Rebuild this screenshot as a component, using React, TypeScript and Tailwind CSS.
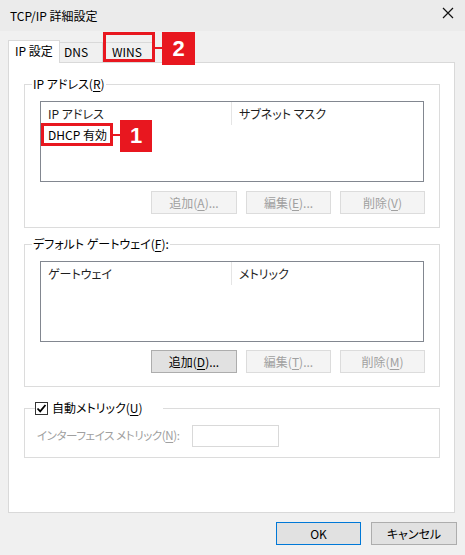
import React from "react";

const font = { fontFamily: '"Noto Sans CJK JP", "Noto Sans", sans-serif' };

function Btn({ children, disabled, primary, w = "w-[85px]" }: { children: React.ReactNode; disabled?: boolean; primary?: boolean; w?: string }) {
  const tone = disabled
    ? "bg-[#f4f4f4] border-[#dcdcdc] text-[#a0a0a0]"
    : primary
      ? "bg-[#e1e1e1] border-[#0078d7] text-black"
      : "bg-[#e1e1e1] border-[#adadad] text-black";
  return (
    <div className={`${w} h-[23px] border flex items-center justify-center text-[12px] leading-none ${tone}`}>
      {children}
    </div>
  );
}

function U({ children }: { children: React.ReactNode }) {
  return <span className="underline underline-offset-2">{children}</span>;
}

function ListBox({ col1, col2, h, children }: { col1: string; col2: string; h: string; children?: React.ReactNode }) {
  return (
    <div className={`w-[384px] ${h} border border-[#828790] bg-white text-[12px] leading-[16px]`}>
      <div className="flex h-[23px] items-center text-[#1e1e1e]">
        <div className="w-[191px] h-full pl-[7px] flex items-center border-r border-[#e5e5e5]">{col1}</div>
        <div className="pl-[7px]">{col2}</div>
      </div>
      {children}
    </div>
  );
}

export default function App() {
  return (
    <div className="relative w-[465px] h-[555px] bg-[#f0f0f0] overflow-hidden text-black [font-feature-settings:'palt']" style={font}>
      {/* title bar */}
      <div className="h-[31px] bg-[#ebebeb] flex items-center justify-between pl-[10px] pr-[11px]">
        <span className="text-[12px] leading-none">TCP/IP 詳細設定</span>
        <svg width="12" height="12" viewBox="0 0 12 12" className="mt-[-6px]">
          <path d="M1 1 L11 11 M11 1 L1 11" stroke="#111" strokeWidth="1.2" fill="none" />
        </svg>
      </div>

      <div className="pl-[8px]">
        {/* tabs */}
        <div className="flex items-end mt-[8px] h-[23px] text-[12px] leading-none">
          <div className="relative z-10 -mb-px h-[23px] w-[52px] border border-b-0 border-[#d9d9d9] bg-white flex items-center pl-[6px] pb-[3px]">
            IP 設定
          </div>
          <div className="h-[20px] w-[43px] border border-l-0 border-b-0 border-[#d9d9d9] flex items-center pl-[4px] pb-[1px]">DNS</div>
          <div className="h-[20px] w-[52px] border border-l-0 border-b-0 border-[#d9d9d9] flex items-center pl-[9px] pb-[1px]">WINS</div>
        </div>

        {/* panel */}
        <div className="w-[447px] h-[451px] border border-[#d9d9d9] bg-white pl-[15px] pt-[13px]">
          <fieldset className="w-[416px] border border-[#dcdcdc] pl-[15px] pr-[14px] pt-[9px] pb-[13px]">
            <legend className="ml-[-8px] px-[1px] text-[12px] leading-[16px]">
              IP アドレス(<U>R</U>)
            </legend>
            <ListBox col1="IP アドレス" col2="サブネット マスク" h="h-[81px]">
              <div className="pl-[7px] pt-[2px]">DHCP 有効</div>
            </ListBox>
            <div className="flex justify-end gap-[9px] mt-[9px]">
              <Btn disabled w="w-[86px]">追加(<U>A</U>)...</Btn>
              <Btn disabled>編集(<U>E</U>)...</Btn>
              <Btn disabled>削除(<U>V</U>)</Btn>
            </div>
          </fieldset>

          <fieldset className="mt-[8px] w-[416px] border border-[#dcdcdc] pl-[15px] pr-[14px] pt-[9px] pb-[13px]">
            <legend className="ml-[-8px] px-[1px] text-[12px] leading-[16px]">
              デフォルト ゲートウェイ(<U>F</U>):
            </legend>
            <ListBox col1="ゲートウェイ" col2="メトリック" h="h-[81px]" />
            <div className="flex justify-end gap-[9px] mt-[8px]">
              <Btn w="w-[86px]">追加(<U>D</U>)...</Btn>
              <Btn disabled>編集(<U>T</U>)...</Btn>
              <Btn disabled>削除(<U>M</U>)</Btn>
            </div>
          </fieldset>

          <fieldset className="mt-[13px] w-[416px] border border-[#dcdcdc] pl-[12px] pr-[14px] pt-[9px] pb-[10px]">
            <legend className="ml-[-2px] pl-[0px] pr-[20px] text-[12px] leading-[16px]">
              <span className="flex items-center gap-[4px]">
                <span className="w-[13px] h-[13px] border border-[#333] bg-white flex items-center justify-center">
                  <svg width="11" height="11" viewBox="0 0 11 11">
                    <path d="M1.5 5.5 L4.2 8.3 L9.5 2" stroke="#000" strokeWidth="1.8" fill="none" />
                  </svg>
                </span>
                <span>自動メトリック(<U>U</U>)</span>
              </span>
            </legend>
            <div className="flex items-center">
              <span className="w-[155px] whitespace-nowrap text-[11.5px] leading-none tracking-[-0.4px] text-[#a0a0a0]">
                インターフェイス メトリック(<U>N</U>):
              </span>
              <div className="w-[87px] h-[22px] border border-[#d9d9d9] bg-white" />
            </div>
          </fieldset>
        </div>

        {/* dialog buttons */}
        <div className="flex justify-end gap-[10px] mt-[9px] pr-[8px]">
          <Btn primary>OK</Btn>
          <Btn w="w-[86px]">キャンセル</Btn>
        </div>
      </div>

      {/* red annotations */}
      <div className="absolute left-[103px] top-[32px] w-[52px] h-[30px] border-[3px] border-[#e8171f]" />
      <div className="absolute left-[155px] top-[47px] w-[7px] h-[2px] bg-[#e8171f]" />
      <div className="absolute left-[162px] top-[32px] w-[33px] h-[33px] bg-[#e8171f] flex items-center justify-center text-white font-bold text-[22px] leading-none" style={{ fontFamily: '"Liberation Sans", Arial, sans-serif' }}>
        2
      </div>
      <div className="absolute left-[41px] top-[123px] w-[72px] h-[23px] border-[3px] border-[#e8171f]" />
      <div className="absolute left-[113px] top-[134px] w-[7px] h-[2px] bg-[#e8171f]" />
      <div className="absolute left-[120px] top-[120px] w-[32px] h-[32px] bg-[#e8171f] flex items-center justify-center text-white font-bold text-[22px] leading-none" style={{ fontFamily: '"Liberation Sans", Arial, sans-serif' }}>
        1
      </div>
    </div>
  );
}
